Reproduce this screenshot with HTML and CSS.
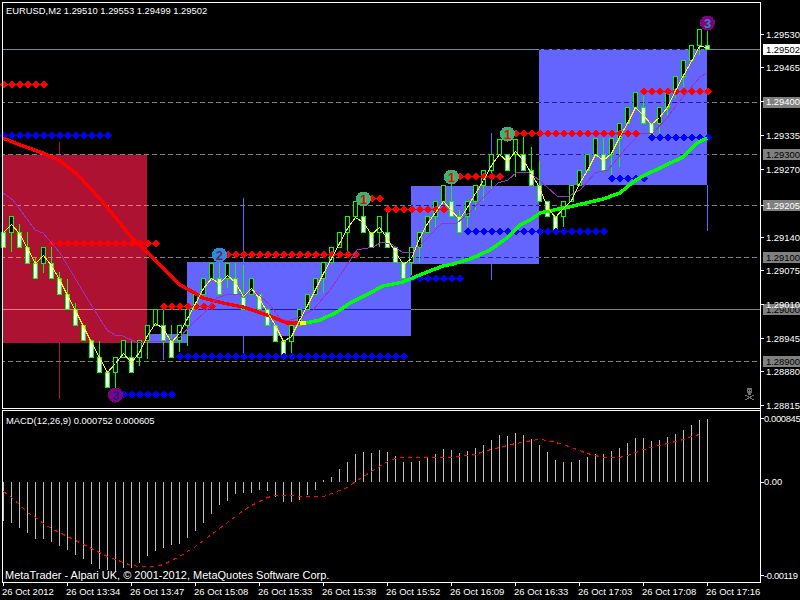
FILE: index.html
```html
<!DOCTYPE html>
<html lang="en">
  <head>
    <meta charset="UTF-8" />
    <title>EURUSD,M2</title>
    <link rel="stylesheet" href="styles.css">
  </head>
  <body>
    <svg id="chart" class="chart" width="800" height="600" viewBox="0 0 800 600">
      <g id="shapes" class="shapes"></g>
      <g id="labels"></g>
    </svg>
    <script src="chart.js"></script>
  </body>
</html>
```

FILE: styles.css
```css
body {
  margin: 0;
  background-color: #000;
}

.chart {
  display: block;
}

.shapes {
  shape-rendering: crispEdges;
}

/* all texts on the chart */
.txt {
  font-family: "Liberation Sans", Arial, sans-serif;
  font-size: 9.4px;
  fill: #fff;
}

.txt-dark {
  fill: #000;
}

.txt-macd {
  letter-spacing: -0.35px;
}

.txt-time {
  font-size: 9.5px;
}

.txt-copy {
  font-size: 11px;
}

.num {
  font-family: "Liberation Sans", Arial, sans-serif;
  font-size: 13px;
  font-weight: bold;
  text-anchor: middle;
}
```

FILE: chart.js
```js
var NS = 'http://www.w3.org/2000/svg';
var shapes = document.getElementById('shapes');
var labels = document.getElementById('labels');

var LIME = '#00ff00';
var CRIMSON = '#ae1232';
var BLUE = '#6464ff';

function barX(i) {
  return 3 + 8 * i;
}

function add(parent, tag, attrs) {
  var el = document.createElementNS(NS, tag);
  for (var k in attrs) el.setAttribute(k, attrs[k]);
  parent.appendChild(el);
  return el;
}

function rect(x, y, w, h, fill) {
  return add(shapes, 'rect', { x: x, y: y, width: w, height: h, fill: fill });
}

function line(x1, y1, x2, y2, color, dash) {
  var attrs = { x1: x1, y1: y1, x2: x2, y2: y2, stroke: color, 'stroke-width': 1 };
  if (dash) {
    attrs['stroke-dasharray'] = dash;
    attrs['stroke-dashoffset'] = x1 % 8;
  }
  return add(shapes, 'line', attrs);
}

function text(x, y, str, cls) {
  var el = add(labels, 'text', { x: x, y: y, 'class': 'txt ' + (cls || '') });
  el.textContent = str;
  return el;
}

function polyline(points, color, width, dash) {
  var attrs = {
    points: points.map(function (p) { return p.join(','); }).join(' '),
    fill: 'none',
    stroke: color,
    'stroke-width': width
  };
  if (dash) attrs['stroke-dasharray'] = dash;
  return add(shapes, 'polyline', attrs);
}

// Zones
var zones = [
  [3, 155, 144, 188, CRIMSON],
  [147, 334, 40, 9, BLUE],
  [187, 262, 224, 74, BLUE],
  [411, 186, 128, 78, BLUE],
  [539, 49, 168, 136, BLUE]
];

zones.forEach(function (z) {
  rect(z[0], z[1], z[2], z[3], z[4]);
});

// Zone coloured spikes
line(59.5, 142, 59.5, 399, CRIMSON);
line(163.5, 342, 163.5, 360, BLUE);
line(243.5, 198, 243.5, 355, BLUE);
line(491.5, 133, 491.5, 280, BLUE);
line(707.5, 185, 707.5, 231, BLUE);

// Horizontal levels change colour over a zone
function level(y, dash) {
  var colors = {};
  colors[CRIMSON] = '#e87a7a';
  colors[BLUE] = '#1c1ca0';
  var x = 3;
  var over = zones.filter(function (z) {
    return y >= z[1] && y < z[1] + z[3];
  }).sort(function (a, b) { return a[0] - b[0]; });
  over.forEach(function (z) {
    if (z[0] > x) line(x, y + 0.5, z[0], y + 0.5, '#808080', dash);
    line(z[0], y + 0.5, z[0] + z[2], y + 0.5, colors[z[4]], dash);
    x = z[0] + z[2];
  });
  line(x, y + 0.5, 760, y + 0.5, '#808080', dash);
}

[102, 154, 205, 257, 361].forEach(function (y) {
  level(y, '5 3');
});
level(309);

// Bid line
line(3, 49.5, 760, 49.5, '#778899');
line(539, 49.5, 707, 49.5, '#1c1ca0', '5 3');

// Candles: type, body top, body bottom, high, low
var candles = [
  ['w',232,247],['b',216,232,216,252],['w',232,247,224],['w',247,263,232],['w',263,278,257],
  ['b',247,263,247,273],['w',263,278,247],['w',278,294,272],['w',294,309,279],['w',309,325,303],
  ['w',325,340],['w',340,357,341],['w',357,372,341],['w',372,387],['b',357,372,357,388],
  ['b',340,357],['w',357,372,340],['b',340,357,340,366],['b',325,340,325,359],['b',309,325],
  ['w',325,340,309,345],['w',340,357,325],['b',325,340,325,352],['b',309,325,309,346],['b',294,309],
  ['b',278,294],['b',263,278],['w',278,294,263],['b',263,278,263,288],['w',278,294,263],
  ['w',297,309,265],['b',278,294],['w',294,309],['w',309,325],['w',325,341],
  ['w',341,354],['b',325,341,325,353],['b',309,325],['b',294,309],['b',278,294],
  ['b',262,278,262,293],['b',247,262],['b',232,247],['b',216,232,216,252],['b',201,216],
  ['w',216,232,201],['w',232,247],['b',216,232,216,247],['w',232,247,213],['w',247,262],
  ['w',262,278],['b',247,262,247,278],['b',232,247,232,263],['b',216,232],['b',201,216,201,227],
  ['b',185,201],['w',201,216,185],['w',216,232,210],['b',201,216,201,227],['b',185,201,185,210],
  ['b',170,185,170,201],['b',154,170,154,190],['b',139,154],['w',154,170],['b',139,154,139,177],
  ['w',154,170,137],['w',170,185,147],['w',185,201,161],['w',201,216],['w',216,229],
  ['b',201,216,201,227],['b',185,201],['b',170,185],['b',154,170],['b',138,154],
  ['w',154,170,138],['b',138,154,138,175],['b',123,138,123,167],['b',107,123],['b',92,107],
  ['w',107,123,95],['w',123,134],['b',107,123,107,133],['b',92,107,92,116],['b',76,92,76,98],
  ['b',60,76,60,87],['b',45,60],['b',29,45,29,55],['w',45,49,29]
];

candles.forEach(function (c, i) {
  var x = barX(i);
  var hi = c[3] === undefined ? c[1] : c[3];
  var lo = c[4] === undefined ? c[2] : c[4];
  line(x + 0.5, hi, x + 0.5, lo, LIME);
  add(shapes, 'rect', {
    x: x - 1.5, y: c[1] + 0.5, width: 4, height: c[2] - c[1],
    fill: c[0] === 'w' ? '#fff' : '#000', stroke: LIME, 'stroke-width': 1
  });
});

// Stop dots: first bar, last bar, y
function dots(first, last, y, color) {
  for (var i = first; i <= last; i++) {
    var cx = barX(i) + 0.5;
    add(shapes, 'polygon', {
      points: [cx - 4, y, cx, y - 4, cx + 4, y, cx, y + 4].join(' '),
      fill: color
    });
  }
}

dots(0, 5, 84.5, '#ff0000');
dots(6, 19, 243.5, '#ff0000');
dots(20, 26, 306.5, '#ff0000');
dots(27, 44, 254.5, '#ff0000');
dots(45, 47, 198.5, '#ff0000');
dots(48, 55, 209.5, '#ff0000');
dots(56, 62, 176.5, '#ff0000');
dots(63, 79, 133.5, '#ff0000');
dots(80, 88, 91.5, '#ff0000');

dots(0, 13, 135.5, '#0000ff');
dots(14, 21, 394.5, '#0000ff');
dots(22, 50, 356.5, '#0000ff');
dots(51, 57, 278.5, '#0000ff');
dots(58, 75, 231.5, '#0000ff');
dots(76, 80, 178.5, '#0000ff');
dots(81, 88, 137.5, '#0000ff');

// Moving averages
polyline([[3,138],[20,145],[43,153],[60,161],[77,174],[100,199],[115,217],[132,238],[147,252],
  [163,268],[172,277],[180,285],[193,292],[203,298],[223,303],[243,307],[270,316],[287,323],[300,323]],
  '#ff0000', 3.5);
polyline([[300,323],[306,323]], '#ffff00', 3.5);
polyline([[306,323],[320,320],[337,312],[350,303],[370,293],[383,286],[403,282],[427,272],[443,266],
  [453,264],[470,259],[490,250],[507,238],[520,225],[530,220],[540,213],[573,206],[603,199],[620,193],
  [633,182],[643,176],[683,157],[697,143],[707,138]],
  LIME, 3.5);
polyline([[3,193],[13,200],[35,230],[43,233],[60,253],[75,278],[90,303],[107,330],[115,335],[123,336],
  [138,343],[147,342],[167,341],[180,337],[193,323],[205,312],[217,298],[228,294],[243,295],[253,290],
  [270,305],[280,318],[287,321],[297,318],[313,310],[330,290],[347,265],[357,250],[373,247],[382,242],
  [393,245],[403,253],[413,252],[427,238],[442,223],[457,223],[470,212],[483,198],[498,183],[508,180],
  [517,172],[527,172],[533,175],[547,187],[557,196],[567,197],[580,190],[595,173],[608,170],[627,147],
  [640,134],[653,133],[667,118],[678,103],[700,77],[707,73]],
  '#9932cc', 1);

var fast = [
  232,224,233,248,263,255,265,279,295,310,326,342,357,372,363,353,362,352,335,323,
  328,342,333,318,303,288,278,283,275,282,296,288,298,312,325,341,336,320,305,289,
  273,258,243,228,217,222,234,227,238,252,264,258,238,223,212,201,210,219,207,193,
  180,165,154,161,151,160,173,187,207,217,208,200,183,170,154,160,153,137,123,107,
  115,124,117,107,90,75,61,46,47
];
polyline(fast.map(function (y, i) { return [barX(i) + 0.5, y + 0.5]; }), '#ffff00', 1);

// Wave numbers
var marks = [
  [219.5, 255, '#1e90e6', '#8a1a4a', '2'],
  [363.5, 199, '#3cb371', '#ff0000', '1'],
  [451.5, 177, '#3cb371', '#ff0000', '1'],
  [507.5, 134, '#3cb371', '#ff0000', '1'],
  [115.5, 395, '#800080', '#1a1a90', '3'],
  [707.5, 23, '#800080', '#1f8fb0', '3']
];

marks.forEach(function (m) {
  add(shapes, 'circle', { cx: m[0], cy: m[1], r: 7.5, fill: m[2] });
  var n = add(labels, 'text', { x: m[0], y: m[1] + 5, 'class': 'num', fill: m[3] });
  n.textContent = m[4];
});

// Skull
var SKULL = '#6e6e6e';
rect(747, 388, 5, 5, SKULL);
rect(748, 393, 3, 2, SKULL);
rect(748, 390, 1, 1, '#000');
rect(750, 390, 1, 1, '#000');
line(745, 395, 754, 400, SKULL);
line(745, 400, 754, 395, SKULL);

// MACD histogram
var macd = [
  521,523,528,533,539,539,542,546,550,555,559,564,569,570,572,568,568,563,556,551,
  548,545,544,538,531,523,514,505,501,494,493,493,490,491,497,502,502,500,495,490,
  480,477,469,462,454,452,453,450,452,456,462,462,461,458,454,449,450,453,451,448,
  445,440,435,436,433,435,439,445,452,460,462,462,460,457,454,454,451,448,443,438,
  438,441,440,437,434,430,425,420,419
];
macd.forEach(function (y, i) {
  line(barX(i) + 0.5, 482, barX(i) + 0.5, y, '#c0c0c0');
});

var signal = [
  491,497,504,512,517,523,528,532,536,540,544,548,552,556,559,562,565,566,566,566,
  564,560,556,551,546,540,534,528,522,516,510,505,501,497,495,495,495,496,496,496,
  496,493,490,487,481,476,471,466,461,458,457,457,457,457,457,457,457,456,455,454,
  451,449,447,445,443,442,440,439,440,442,444,447,450,453,455,457,457,457,455,452,
  449,447,445,443,441,439,436,434
];
polyline(signal.map(function (y, i) { return [barX(i) + 0.5, y + 0.5]; }), '#ff0000', 1, '4 4');

// Frames
rect(2, 2, 759, 1, '#fff');
rect(2, 2, 1, 407, '#fff');
rect(2, 408, 759, 1, '#fff');
rect(2, 410, 759, 1, '#fff');
rect(2, 410, 1, 173, '#fff');
rect(2, 582, 759, 1, '#fff');
rect(760, 2, 1, 581, '#fff');

// Price scale
var prices = [
  [34, '1.29530'], [67, '1.29465'], [101, '1.29400'], [135, '1.29335'], [169, '1.29270'], [205, '1.29205'],
  [237, '1.29140'], [270, '1.29075'], [304, '1.29010'], [338, '1.28945'], [371, '1.28880'], [405, '1.28815']
];
var levels = [
  [102], [154, '1.29300'], [205], [257, '1.29100'], [309, '1.29000'], [361, '1.28900']
];

levels.forEach(function (p) {
  rect(763, p[0] - 5, 37, 11, '#808080');
  if (p[1]) text(766, p[0] + 4, p[1], 'txt-dark');
});

rect(763, 44, 37, 11, '#fff');
text(766, 53, '1.29502', 'txt-dark');

prices.forEach(function (p) {
  rect(761, p[0], 3, 1, '#fff');
  text(766, p[0] + 4, p[1]);
});

rect(761, 418, 3, 1, '#fff');
rect(761, 482, 3, 1, '#fff');
rect(761, 575, 3, 1, '#fff');
text(764, 422, '0.000845', 'txt-macd');
text(764, 485, '0.00');
text(764, 579, '-0.00119', 'txt-macd');

// Time scale
var times = [
  '26 Oct 2012', '26 Oct 13:34', '26 Oct 13:47', '26 Oct 15:08', '26 Oct 15:33', '26 Oct 15:38',
  '26 Oct 15:52', '26 Oct 16:09', '26 Oct 16:33', '26 Oct 17:03', '26 Oct 17:08', '26 Oct 17:16'
];
times.forEach(function (t, i) {
  var x = 3 + 64 * i;
  rect(x, 583, 1, 3, '#fff');
  text(x - 1, 595, t, 'txt-time');
});

text(6, 14, 'EURUSD,M2  1.29510 1.29553 1.29499 1.29502').setAttribute('xml:space', 'preserve');
text(6, 424, 'MACD(12,26,9) 0.000752 0.000605');
text(5, 579, 'MetaTrader - Alpari UK, © 2001-2012, MetaQuotes Software Corp.', 'txt-copy');
```
